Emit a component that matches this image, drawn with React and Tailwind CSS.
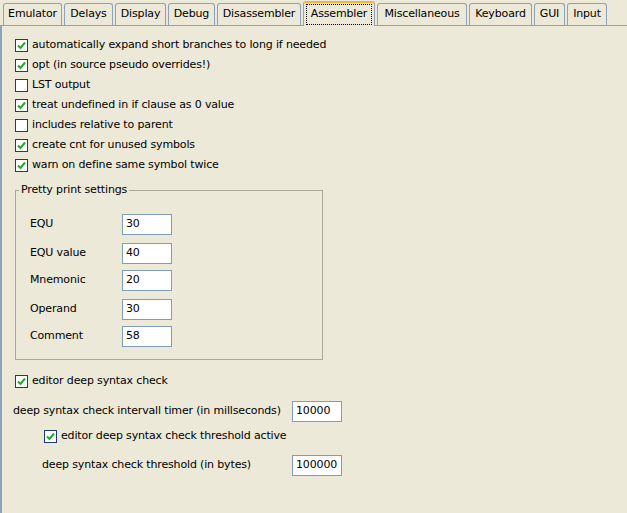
import React from "react";

const TABS = [
  { name: "Emulator", w: "w-[59px]" },
  { name: "Delays", w: "w-[49px]" },
  { name: "Display", w: "w-[51px]" },
  { name: "Debug", w: "w-[47px]" },
  { name: "Disassembler", w: "w-[84px]" },
  { name: "Assembler", w: "w-[72px]", active: true },
  { name: "Miscellaneous", w: "w-[90px]" },
  { name: "Keyboard", w: "w-[63px]" },
  { name: "GUI", w: "w-[31px]" },
  { name: "Input", w: "w-[40px]" },
];

const OPTIONS = [
  { label: "automatically expand short branches to long if needed", on: true },
  { label: "opt (in source pseudo overrides!)", on: true },
  { label: "LST output", on: false },
  { label: "treat undefined in if clause as 0 value", on: true },
  { label: "includes relative to parent", on: false },
  { label: "create cnt for unused symbols", on: true },
  { label: "warn on define same symbol twice", on: true },
];

const PRETTY = [
  { label: "EQU", value: "30", mt: "mt-0" },
  { label: "EQU value", value: "40", mt: "mt-[8px]" },
  { label: "Mnemonic", value: "20", mt: "mt-[6px]" },
  { label: "Operand", value: "30", mt: "mt-[8px]" },
  { label: "Comment", value: "58", mt: "mt-[6px]" },
];

function Check({ on }) {
  return (
    <span className="w-[13px] h-[13px] shrink-0 border border-[#1c3b78] bg-white flex items-center justify-center">
      {on && (
        <svg width="9" height="9" viewBox="0 0 9 9">
          <path d="M1 4.5 L3.5 7 L8 1.5" fill="none" stroke="#2aa52a" strokeWidth="2" />
        </svg>
      )}
    </span>
  );
}

function Field({ value, w = "w-[50px]" }) {
  return (
    <div className={`${w} h-[21px] border border-[#7f9db9] bg-white pl-[3px] flex items-center`}>
      {value}
    </div>
  );
}

export default function App() {
  return (
    <div
      className="w-[627px] h-[513px] bg-[#ece9d8] text-black text-[11px] tracking-[-0.15px] overflow-hidden"
      style={{ fontFamily: '"DejaVu Sans", Verdana, sans-serif' }}
    >
      <div className="flex items-end h-[26px] pl-[3px] gap-[2px] border-b border-[#8da1ba]">
        {TABS.map((t) =>
          t.active ? (
            <div
              key={t.name}
              className={`${t.w} h-[25px] -mb-px bg-[#ece9d8] border border-b-0 border-[#8da1ba] rounded-t-[3px] border-t-2 border-t-[#f5b730] flex items-start justify-center pt-px`}
            >
              <span className="border border-dotted border-black px-[4px] h-[21px] flex items-center">{t.name}</span>
            </div>
          ) : (
            <div
              key={t.name}
              className={`${t.w} h-[22px] border border-b-0 border-[#8da1ba] rounded-t-[3px] flex items-center justify-center`}
            >
              {t.name}
            </div>
          )
        )}
      </div>

      <div className="h-[487px] border-l-2 border-[#8da1ba] pl-[13px] pt-[13px]">
        <div className="flex flex-col gap-[7px]">
          {OPTIONS.map((o) => (
            <label key={o.label} className="flex items-center gap-[4px] h-[13px]">
              <Check on={o.on} />
              <span>{o.label}</span>
            </label>
          ))}
        </div>

        <fieldset className="mt-[18px] w-[308px] h-[170px] border border-[#a9a89b] pl-[14px] pt-[16px] relative">
          <legend className="px-[2px] left-[3px] -mt-[8px] absolute top-0 bg-[#ece9d8] leading-[14px]">
            Pretty print settings
          </legend>
          <div className="flex flex-col pt-[7px]">
            {PRETTY.map((p) => (
              <div key={p.label} className={`flex items-center ${p.mt}`}>
                <span className="w-[92px]">{p.label}</span>
                <Field value={p.value} />
              </div>
            ))}
          </div>
        </fieldset>

        <label className="flex items-center gap-[4px] h-[13px] mt-[15px]">
          <Check on />
          <span>editor deep syntax check</span>
        </label>

        <div className="flex items-center mt-[13px] -ml-[2px]">
          <span className="w-[279px]">deep syntax check intervall timer (in millseconds)</span>
          <Field value="10000" />
        </div>

        <label className="flex items-center gap-[4px] h-[13px] mt-[8px] ml-[29px]">
          <Check on />
          <span>editor deep syntax check threshold active</span>
        </label>

        <div className="flex items-center mt-[12px] ml-[27px]">
          <span className="w-[250px]">deep syntax check threshold (in bytes)</span>
          <Field value="100000" />
        </div>
      </div>
    </div>
  );
}
